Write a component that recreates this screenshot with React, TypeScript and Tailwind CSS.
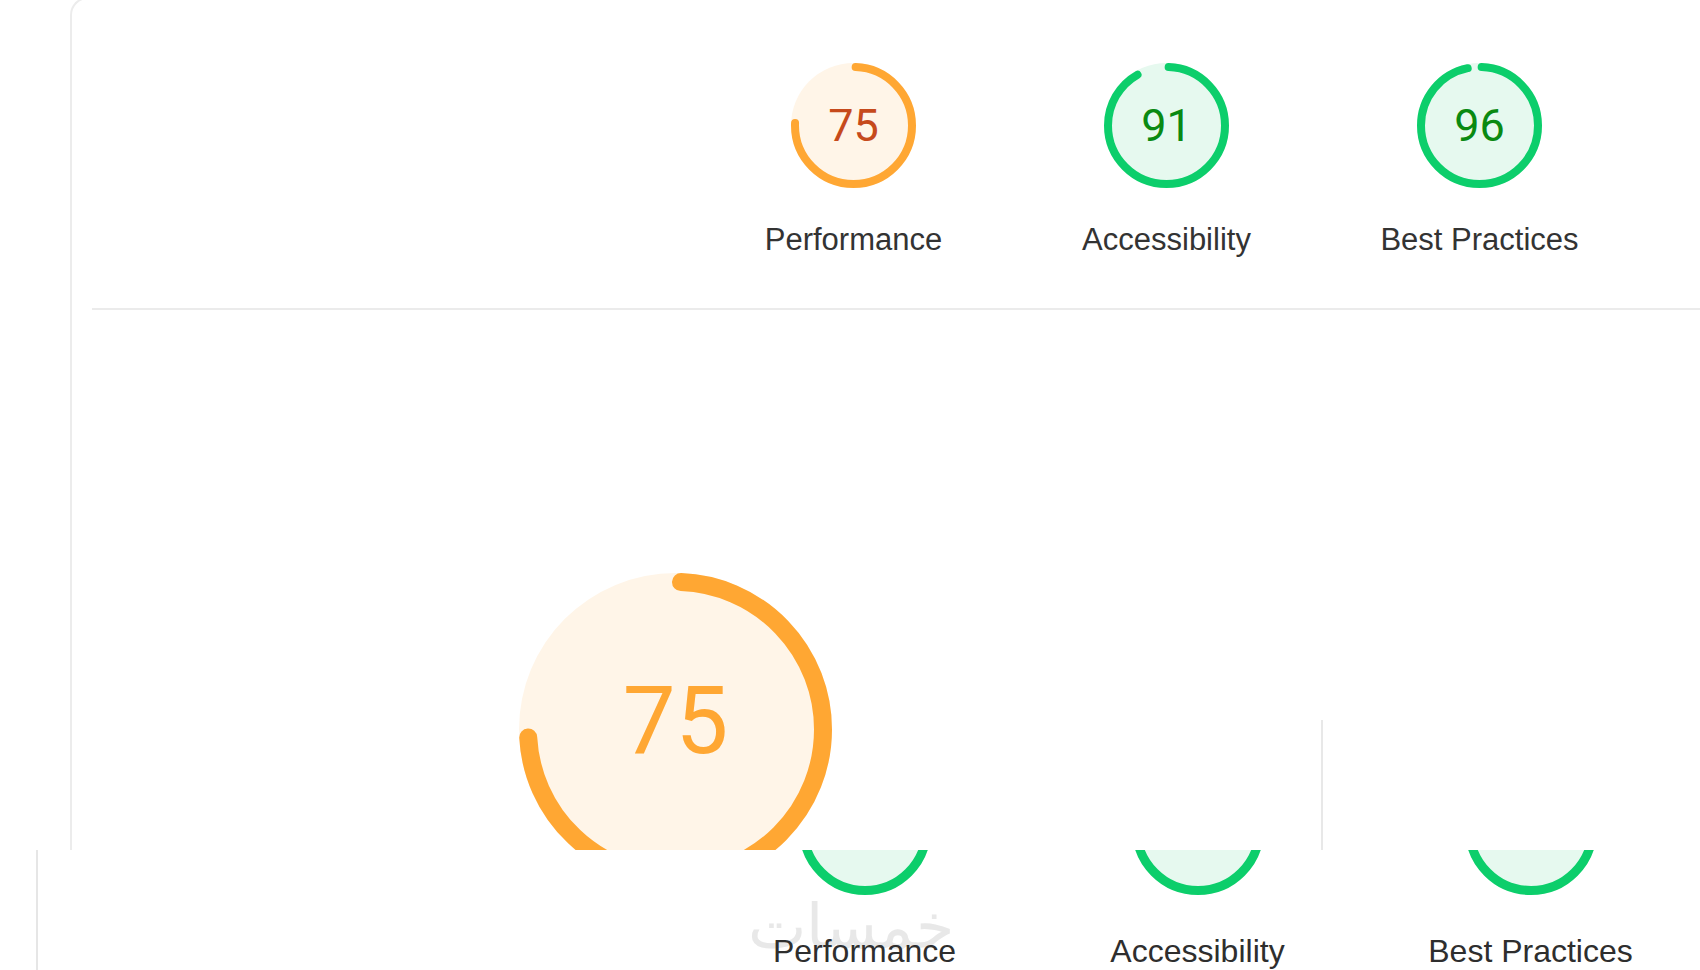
import React from 'react';

type Tone = {
  stroke: string;
  fill: string;
  text: string;
};

const orange: Tone = { stroke: '#ffa733', fill: '#fff5e8', text: 'text-[#c64a1c]' };
const green: Tone = { stroke: '#0cce6b', fill: '#e6f9ef', text: 'text-[#0a8a12]' };

interface RingProps {
  size: number;
  stroke: number;
  percent: number;
  tone: Tone;
}

// Lighthouse style score ring, arc starts at 12 o'clock and runs clockwise
const Ring: React.FC<RingProps> = ({ size, stroke, percent, tone }) => {
  const c = size / 2;
  const r = (size - stroke) / 2;
  const len = 2 * Math.PI * r;
  return (
    <svg width={size} height={size} viewBox={`0 0 ${size} ${size}`} className="block">
      <circle cx={c} cy={c} r={c} fill={tone.fill} />
      <circle
        cx={c}
        cy={c}
        r={r}
        fill="none"
        stroke={tone.stroke}
        strokeWidth={stroke}
        strokeLinecap="round"
        strokeDasharray={`${percent * len} ${len}`}
        strokeDashoffset={-len * 0.006}
        transform={`rotate(-90 ${c} ${c})`}
      />
    </svg>
  );
};

const TopGauge: React.FC<{ score: number; label: string; tone: Tone }> = ({ score, label, tone }) => (
  <div className="w-[313px] flex flex-col items-center">
    <div className="relative w-[125px] h-[125px]">
      <Ring size={125} stroke={8} percent={score / 100} tone={tone} />
      <div className={`absolute inset-0 flex items-center justify-center text-[45px] leading-none font-['Roboto',sans-serif] ${tone.text}`}>
        {score}
      </div>
    </div>
    <div className="mt-[36px] text-[31px] leading-none text-[#333333] whitespace-nowrap">{label}</div>
  </div>
);

const BottomGauge: React.FC<{ score: number; label: string }> = ({ score, label }) => (
  <div className="w-[333px] flex flex-col items-center">
    <div className="-mt-[87px]">
      <Ring size={132} stroke={9} percent={score / 100} tone={green} />
    </div>
    <div className="mt-[40px] text-[32px] leading-none text-[#2e2e2e] whitespace-nowrap">{label}</div>
  </div>
);

export default function App() {
  return (
    <div className="w-[1700px] h-[970px] overflow-hidden bg-white font-['Liberation_Sans',Arial,sans-serif]">
      {/* report card, clipped where the second capture starts */}
      <div className="h-[850px] overflow-hidden">
        <div className="ml-[70px] -mt-[3px] h-[880px] border-l-2 border-t-2 border-[#ececec] rounded-tl-[18px]">
          <div className="flex pt-[64px] pl-[625px]">
            <TopGauge score={75} label="Performance" tone={orange} />
            <TopGauge score={91} label="Accessibility" tone={green} />
            <TopGauge score={96} label="Best Practices" tone={green} />
          </div>

          <div className="mt-[53px] ml-[20px] h-[2px] bg-[#ebebeb]"></div>

          <div className="flex items-start">
            <div className="relative ml-[447px] mt-[263px] w-[313px] h-[313px]">
              <Ring size={313} stroke={18} percent={0.735} tone={orange} />
              <div className="absolute inset-0 flex items-center justify-center">
                <span className="mb-[18px] text-[94px] leading-none text-[#ffa733] font-['Roboto',sans-serif]">75</span>
              </div>
            </div>
            <div className="ml-[489px] mt-[410px] w-[2px] h-[140px] bg-[#e8e8e8]"></div>
          </div>
        </div>
      </div>

      {/* lower capture */}
      <div className="relative h-[120px] overflow-hidden">
        <div className="absolute left-[748px] top-[46px] text-[62px] leading-none text-[#e8e8e8] font-['DejaVu_Sans',sans-serif] font-extralight" dir="rtl">
          خمسات
        </div>
        <div className="relative ml-[36px] h-full border-l-2 border-[#e6e6e6] flex pl-[660px]">
          <BottomGauge score={93} label="Performance" />
          <BottomGauge score={91} label="Accessibility" />
          <BottomGauge score={96} label="Best Practices" />
        </div>
      </div>
    </div>
  );
}
